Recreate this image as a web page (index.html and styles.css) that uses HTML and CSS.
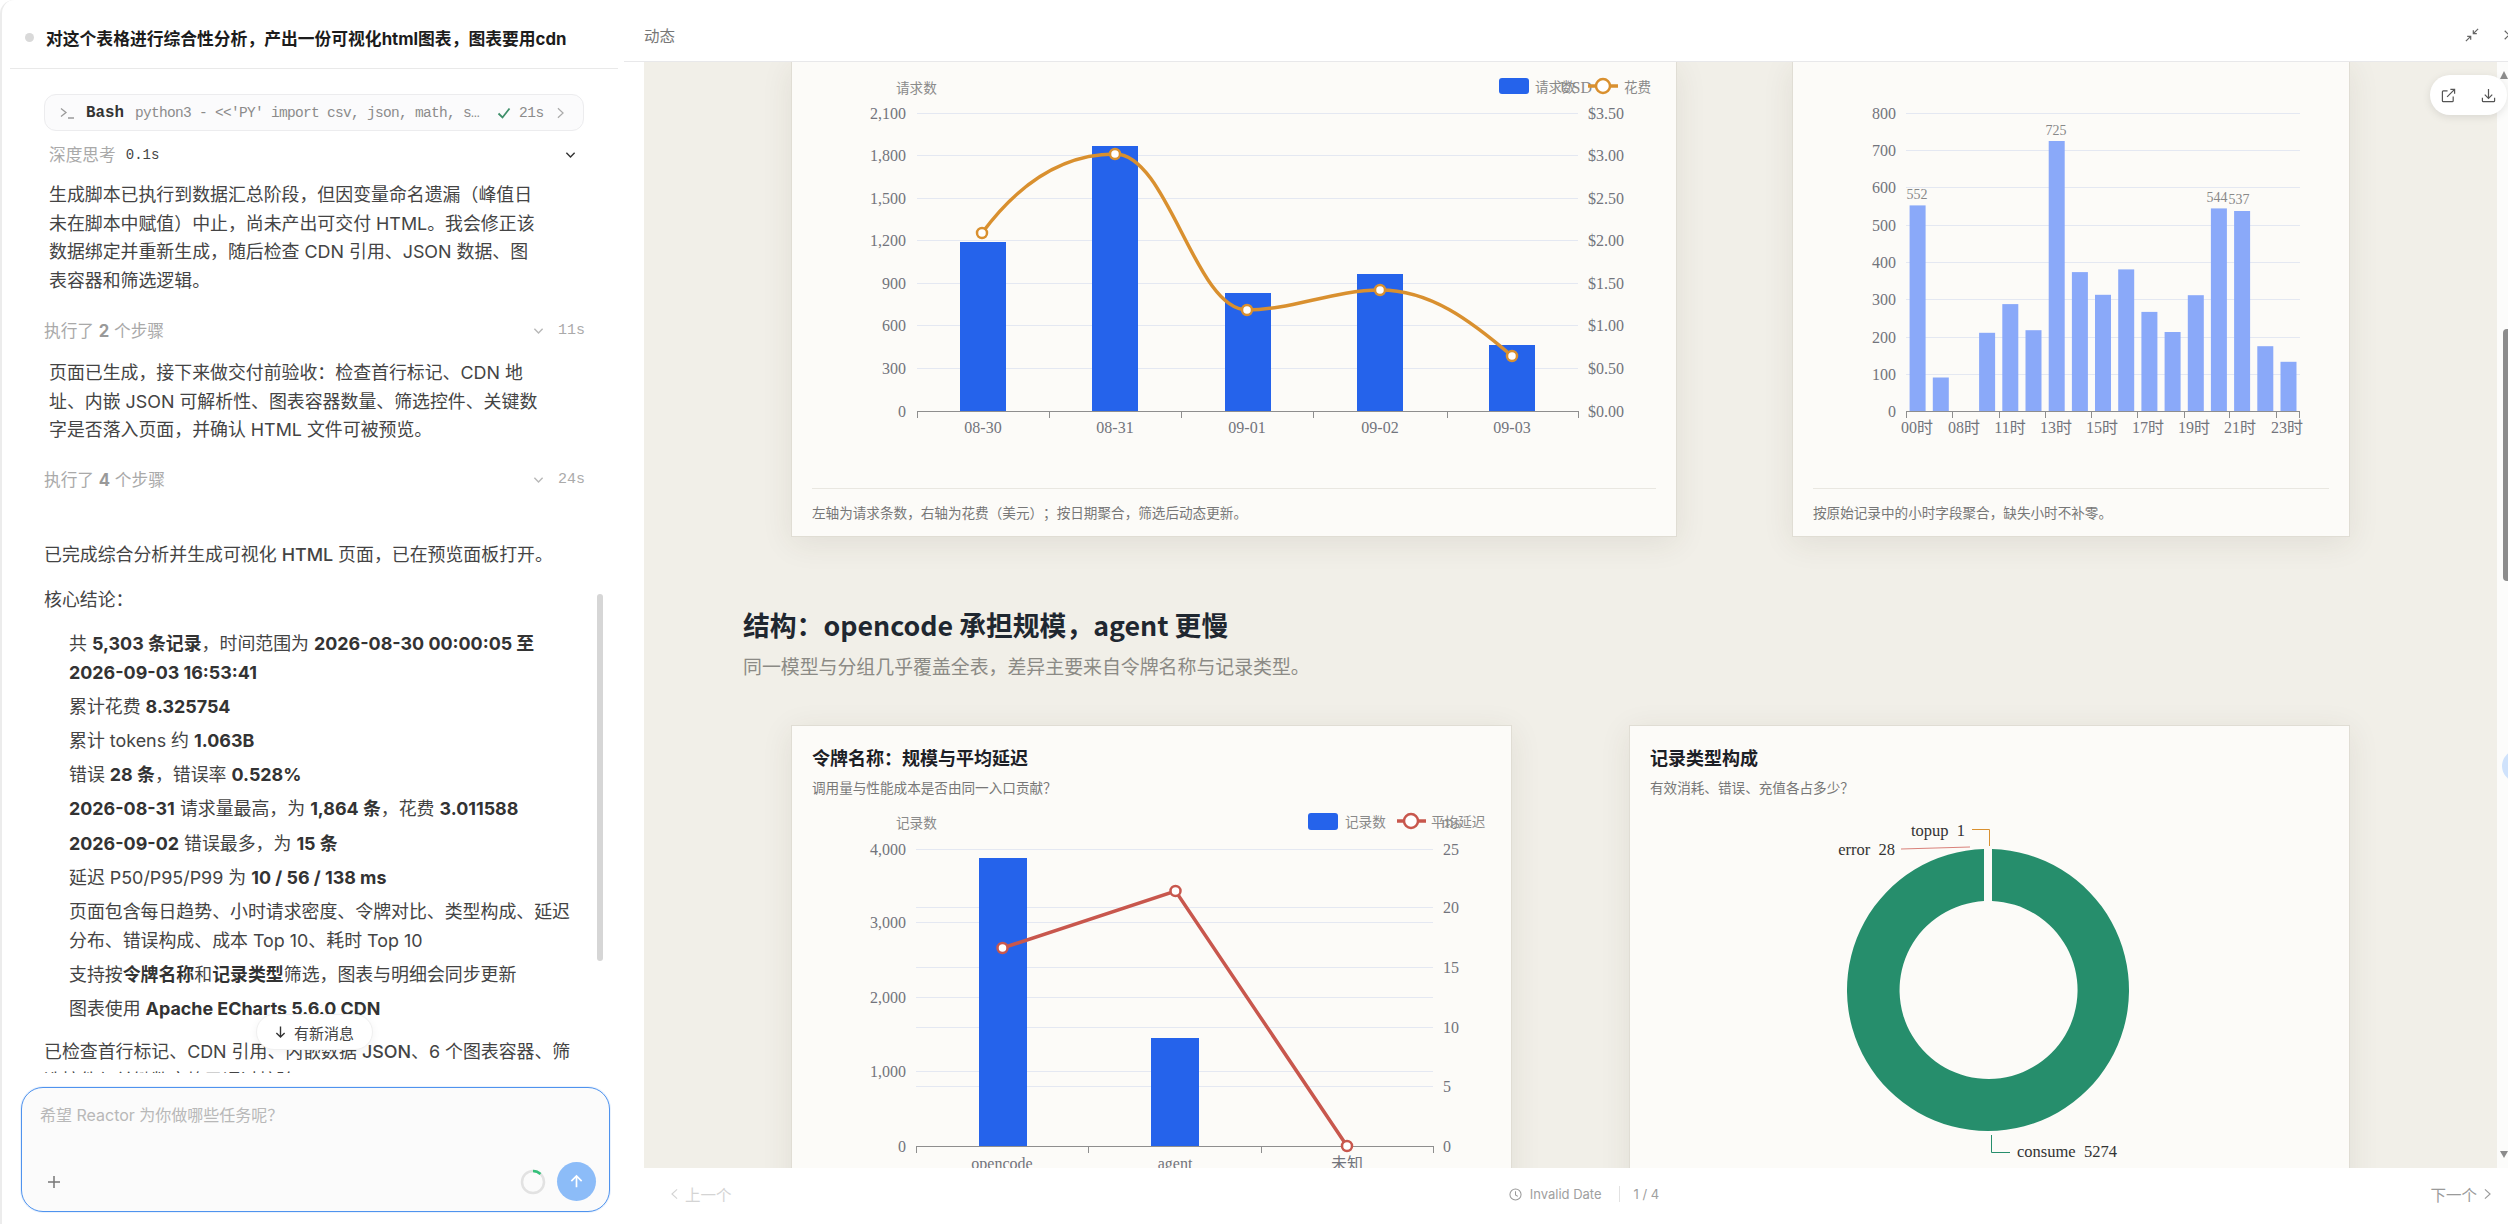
FILE: index.html
```html
<!DOCTYPE html>
<html lang="zh-CN">
<head>
<meta charset="utf-8">
<title>Reactor</title>
<link rel="stylesheet" href="styles.css">
</head>
<body>
<div class="app">
  <aside class="chat">
    <header class="chat-head">
      <span class="dot"></span>
      <h1>对这个表格进行综合性分析，产出一份可视化html图表，图表要用cdn</h1>
    </header>
    <div class="messages">
      <div class="bash">
        <svg class="ic-term" viewBox="0 0 14 12"><path d="M1 1.5 6 5.5 1 9.5M8 11h6"/></svg>
        <span class="bash-name">Bash</span>
        <span class="bash-cmd">python3 - &lt;&lt;'PY' import csv, json, math, s…</span>
        <svg class="ic-check" viewBox="0 0 14 14"><path d="M1.5 7.5 5.5 11.5 12.5 2.5"/></svg>
        <span class="bash-time">21s</span>
        <svg class="ic-chev" viewBox="0 0 8 14"><path d="M1 1.5 7 7 1 12.5"/></svg>
      </div>
      <div class="think">
        <span class="think-label">深度思考</span><span class="think-time">0.1s</span>
        <svg class="ic-down dark" viewBox="0 0 12 8"><path d="M1.5 1.5 6 6.2 10.5 1.5"/></svg>
      </div>
      <p class="para indent">生成脚本已执行到数据汇总阶段，但因变量命名遗漏（峰值日<br>未在脚本中赋值）中止，尚未产出可交付 HTML。我会修正该<br>数据绑定并重新生成，随后检查 CDN 引用、JSON 数据、图<br>表容器和筛选逻辑。</p>
      <div class="steps first">
        <span>执行了 <b>2</b> 个步骤</span>
        <svg class="ic-down" viewBox="0 0 12 8"><path d="M1.5 1.5 6 6.2 10.5 1.5"/></svg>
        <span class="steps-time">11s</span>
      </div>
      <p class="para indent second">页面已生成，接下来做交付前验收：检查首行标记、CDN 地<br>址、内嵌 JSON 可解析性、图表容器数量、筛选控件、关键数<br>字是否落入页面，并确认 HTML 文件可被预览。</p>
      <div class="steps">
        <span>执行了 <b>4</b> 个步骤</span>
        <svg class="ic-down" viewBox="0 0 12 8"><path d="M1.5 1.5 6 6.2 10.5 1.5"/></svg>
        <span class="steps-time">24s</span>
      </div>
      <p class="para done">已完成综合分析并生成可视化 <span class="mid-weight">HTML</span> 页面，已在预览面板打开。</p>
      <p class="para core">核心结论：</p>
      <ul class="points">
        <li>共 <b>5,303 条记录</b>，时间范围为 <b>2026-08-30 00:00:05 至<br>2026-09-03 16:53:41</b></li>
        <li>累计花费 <b>8.325754</b></li>
        <li>累计 tokens 约 <b>1.063B</b></li>
        <li>错误 <b>28 条</b>，错误率 <b>0.528%</b></li>
        <li><b>2026-08-31</b> 请求量最高，为 <b>1,864 条</b>，花费 <b>3.011588</b></li>
        <li><b>2026-09-02</b> 错误最多，为 <b>15 条</b></li>
        <li>延迟 P50/P95/P99 为 <b>10 / 56 / 138 ms</b></li>
        <li>页面包含每日趋势、小时请求密度、令牌对比、类型构成、延迟<br>分布、错误构成、成本 Top 10、耗时 Top 10</li>
        <li>支持按<b>令牌名称</b>和<b>记录类型</b>筛选，图表与明细会同步更新</li>
        <li>图表使用 <b>Apache ECharts 5.6.0 CDN</b></li>
      </ul>
      <p class="para tail">已检查首行标记、CDN 引用、内嵌数据 <span class="mid-weight">JSON</span>、6 个图表容器、筛<br>选控件与关键数字均已通过校验。</p>
    </div>
    <span class="chat-scroll"></span>
    <button class="new-msg" type="button">
      <svg viewBox="0 0 12 14"><path d="M6 1v11.5M1.5 8 6 12.5 10.500 8"/></svg>
      有新消息
    </button>
    <div class="composer">
      <div class="input">
        <div class="placeholder">希望 Reactor 为你做哪些任务呢？</div>
        <div class="input-tools">
          <svg class="ic-plus" viewBox="0 0 14 14"><path d="M7 1v12M1 7h12"/></svg>
          <svg class="ic-spin" viewBox="0 0 26 26"><circle class="spin-bg" cx="13" cy="13" r="11"/><path class="spin-fg" d="M13 2a11 11 0 0 1 7.5 3"/></svg>
          <span class="send"><svg viewBox="0 0 16 16"><path d="M8 14V2M2.5 7.5 8 2l5.5 5.5"/></svg></span>
        </div>
      </div>
    </div>
  </aside>

  <main class="preview">
    <header class="preview-head">
      <span class="preview-title">动态</span>
      <svg class="ic-shrink" viewBox="0 0 16 16"><path d="M1 15 6.5 9.5M2.5 9.5h4v4M15 1 9.5 6.5M9.5 2.5v4h4"/></svg>
      <svg class="ic-close" viewBox="0 0 14 14"><path d="M2 2l10 10M12 2 2 12"/></svg>
    </header>
    <div class="stage">
      <div class="canvas">
        <section class="row row-top">
          <article class="card card-open">
            <svg class="chart" width="884" height="420" viewBox="792 62 884 420">
              <g class="grid">
                <path d="M917 113.500H1578M917 155.500H1578M917 198.500H1578M917 240.500H1578M917 283.500H1578M917 325.500H1578M917 368.500H1578"/>
              </g>
              <g class="bar-main">
                <rect x="960" y="242" width="46" height="169"/>
                <rect x="1092" y="146" width="46" height="265"/>
                <rect x="1225" y="293" width="46" height="118"/>
                <rect x="1357" y="274" width="46" height="137"/>
                <rect x="1489" y="345" width="46" height="66"/>
              </g>
              <path class="axis" d="M917 411.500H1579M917.500 411V418M1049.500 411V418M1181.500 411V418M1313.500 411V418M1447.500 411V418M1578.500 411V418"/>
              <path class="line-orange" d="M982 233C1025 175 1070 154 1115 154C1168 154 1195 310 1247 310C1290 310 1335 290 1380 290C1430 290 1470 320 1512 356"/>
              <g class="pt-orange">
                <circle cx="982" cy="233" r="5"/><circle cx="1115" cy="154" r="5"/><circle cx="1247" cy="310" r="5"/><circle cx="1380" cy="290" r="5"/><circle cx="1512" cy="356" r="5"/>
              </g>
              <g class="tx end">
                <text x="906" y="113">2,100</text><text x="906" y="155">1,800</text><text x="906" y="198">1,500</text><text x="906" y="240">1,200</text><text x="906" y="283">900</text><text x="906" y="325">600</text><text x="906" y="368">300</text><text x="906" y="411">0</text>
              </g>
              <g class="tx">
                <text x="1588" y="113">$3.50</text><text x="1588" y="155">$3.00</text><text x="1588" y="198">$2.50</text><text x="1588" y="240">$2.00</text><text x="1588" y="283">$1.50</text><text x="1588" y="325">$1.00</text><text x="1588" y="368">$0.50</text><text x="1588" y="411">$0.00</text>
              </g>
              <g class="tx mid">
                <text x="983" y="427">08-30</text><text x="1115" y="427">08-31</text><text x="1247" y="427">09-01</text><text x="1380" y="427">09-02</text><text x="1512" y="427">09-03</text>
              </g>
              <text class="cn" x="896" y="87">请求数</text>
              <rect class="legend-bar" x="1499" y="78" width="30" height="16" rx="3"/>
              <text class="cn" x="1535" y="86">请求数</text>
              <text class="tx-soft end" x="1592" y="87">USD</text>
              <path class="line-orange" d="M1588 86H1618"/>
              <circle class="pt-legend-o" cx="1603" cy="86" r="7"/>
              <text class="cn" x="1624" y="86">花费</text>
            </svg>
            <p class="card-foot">左轴为请求条数，右轴为花费（美元）；按日期聚合，筛选后动态更新。</p>
          </article>
          <article class="card card-open">
            <svg class="chart" width="556" height="420" viewBox="1793 62 556 420">
              <g class="grid">
                <path d="M1906 113.500H2300M1906 150.500H2300M1906 187.500H2300M1906 225.500H2300M1906 262.500H2300M1906 299.500H2300M1906 337.500H2300M1906 374.500H2300"/>
              </g>
              <g class="bar-soft">
                <rect x="1909.600" y="205.400" width="16" height="205.600"/>
                <rect x="1932.800" y="377.500" width="16" height="33.500"/>
                <rect x="1979.100" y="332.800" width="16" height="78.200"/>
                <rect x="2002.300" y="304.100" width="16" height="106.900"/>
                <rect x="2025.500" y="330.200" width="16" height="80.800"/>
                <rect x="2048.700" y="141" width="16" height="270"/>
                <rect x="2071.900" y="272.100" width="16" height="138.900"/>
                <rect x="2095" y="294.800" width="16" height="116.200"/>
                <rect x="2118.200" y="269.400" width="16" height="141.600"/>
                <rect x="2141.400" y="311.900" width="16" height="99.100"/>
                <rect x="2164.600" y="332" width="16" height="79"/>
                <rect x="2187.800" y="295.200" width="16" height="115.800"/>
                <rect x="2210.900" y="208.400" width="16" height="202.600"/>
                <rect x="2234.100" y="211" width="16" height="200"/>
                <rect x="2257.300" y="346.200" width="16" height="64.800"/>
                <rect x="2280.500" y="361.800" width="16" height="49.200"/>
              </g>
              <path class="axis" d="M1906 411.500H2300M1906.500 411V418M1952.500 411V418M1999.500 411V418M2045.500 411V418M2091.500 411V418M2137.500 411V418M2184.500 411V418M2229.500 411V418M2276.500 411V418M2299.500 411V418"/>
              <g class="tx end">
                <text x="1896" y="113">800</text><text x="1896" y="150">700</text><text x="1896" y="187">600</text><text x="1896" y="225">500</text><text x="1896" y="262">400</text><text x="1896" y="299">300</text><text x="1896" y="337">200</text><text x="1896" y="374">100</text><text x="1896" y="411">0</text>
              </g>
              <g class="tx mid">
                <text x="1917" y="427">00时</text><text x="1964" y="427">08时</text><text x="2010" y="427">11时</text><text x="2056" y="427">13时</text><text x="2102" y="427">15时</text><text x="2148" y="427">17时</text><text x="2194" y="427">19时</text><text x="2240" y="427">21时</text><text x="2287" y="427">23时</text>
              </g>
              <g class="val">
                <text x="1917" y="194">552</text><text x="2056" y="130">725</text><text x="2217" y="197">544</text><text x="2239" y="199">537</text>
              </g>
            </svg>
            <p class="card-foot">按原始记录中的小时字段聚合，缺失小时不补零。</p>
          </article>
        </section>
        <div class="section-head">
          <h2>结构：opencode 承担规模，agent 更慢</h2>
          <p>同一模型与分组几乎覆盖全表，差异主要来自令牌名称与记录类型。</p>
        </div>
        <section class="row row-bottom">
          <article class="card">
            <div class="card-head">
              <h3>令牌名称：规模与平均延迟</h3>
              <p>调用量与性能成本是否由同一入口贡献？</p>
            </div>
            <svg class="chart" width="719" height="370" viewBox="792 798 719 370">
              <g class="grid">
                <path d="M916 849.500H1433M916 922.500H1433M916 997.500H1433M916 1071.500H1433M916 907.500H1433M916 967.500H1433M916 1027.500H1433M916 1086.500H1433"/>
              </g>
              <g class="bar-main">
                <rect x="979" y="858" width="48" height="288"/>
                <rect x="1151" y="1038" width="48" height="108"/>
              </g>
              <path class="axis" d="M916 1146.500H1434M916.500 1146V1153M1088.500 1146V1153M1261.500 1146V1153M1433.500 1146V1153"/>
              <path class="line-red" d="M1002.500 948 1175.500 891 1347 1146"/>
              <g class="pt-red">
                <circle cx="1002.500" cy="948" r="5"/><circle cx="1175.500" cy="891" r="5"/><circle cx="1347" cy="1146" r="5"/>
              </g>
              <g class="tx end">
                <text x="906" y="849">4,000</text><text x="906" y="922">3,000</text><text x="906" y="997">2,000</text><text x="906" y="1071">1,000</text><text x="906" y="1146">0</text>
              </g>
              <g class="tx">
                <text x="1443" y="849">25</text><text x="1443" y="907">20</text><text x="1443" y="967">15</text><text x="1443" y="1027">10</text><text x="1443" y="1086">5</text><text x="1443" y="1146">0</text>
              </g>
              <g class="tx mid">
                <text x="1002" y="1163">opencode</text><text x="1175" y="1163">agent</text><text x="1347" y="1163">未知</text>
              </g>
              <text class="cn" x="896" y="822">记录数</text>
              <rect class="legend-bar" x="1308" y="813" width="30" height="17" rx="3"/>
              <text class="cn" x="1345" y="821">记录数</text>
              <path class="line-red" d="M1397 821H1426"/>
              <circle class="pt-legend-r" cx="1411" cy="821" r="7"/>
              <text class="cn" x="1431" y="821">平均延迟</text>
              <text class="tx-soft end" x="1460" y="822">ms</text>
            </svg>
          </article>
          <article class="card">
            <div class="card-head">
              <h3>记录类型构成</h3>
              <p>有效消耗、错误、充值各占多少？</p>
            </div>
            <svg class="chart" width="719" height="370" viewBox="1630 798 719 370">
              <path class="donut" d="M1992 849A141 141 0 1 1 1984 849L1984 901.100A89 89 0 1 0 1992 901.050Z"/>
              <path class="lead-o" d="M1972 829.500H1989.500V846"/>
              <path class="lead-r" d="M1901 849 1970 847"/>
              <path class="lead-g" d="M1991.500 1135V1152.500H2010"/>
              <g class="pie-label">
                <text x="1965" y="830" text-anchor="end">topup  1</text>
                <text x="1895" y="849" text-anchor="end">error  28</text>
                <text x="2017" y="1151">consume  5274</text>
              </g>
            </svg>
          </article>
        </section>
      </div>
      <div class="gutter">
        <span class="gutter-up"></span>
        <span class="gutter-thumb"></span>
        <span class="gutter-down"></span>
        <span class="gutter-tab"></span>
      </div>
      <div class="float-tools">
        <svg viewBox="0 0 16 16"><path d="M7 3H2.500A1 1 0 0 0 1.500 4V13.500A1 1 0 0 0 2.500 14.500H12A1 1 0 0 0 13 13.500V9M6.500 9.500 14.500 1.500M10 1.500h4.500V6"/></svg>
        <svg viewBox="0 0 16 16"><path d="M8 1V10.500M4 7l4 4 4-4M1.500 10.500V13.500A1 1 0 0 0 2.500 14.500H13.500A1 1 0 0 0 14.500 13.500V10.500"/></svg>
      </div>
    </div>
    <footer class="preview-foot">
      <span class="pager off"><svg viewBox="0 0 8 14"><path d="M7 1.500 1 7l6 5.500"/></svg>上一个</span>
      <span class="meta">
        <svg class="ic-clock" viewBox="0 0 14 14"><circle cx="7" cy="7" r="6"/><path d="M7 3.500V7.500L9.500 9"/></svg>
        <span>Invalid Date</span>
        <i class="sep"></i>
        <span>1 / 4</span>
      </span>
      <span class="pager">下一个<svg viewBox="0 0 8 14"><path d="M1 1.500 7 7l-6 5.500"/></svg></span>
    </footer>
  </main>
</div>
</body>
</html>
```

FILE: styles.css
```css
* { box-sizing: border-box; }
html, body { margin: 0; height: 100%; overflow: hidden; background: #fff; }
body { font-family: Inter, "Noto Sans CJK SC", sans-serif; color: #333; text-spacing-trim: space-all; }
svg { fill: none; }
p, h1, h2, h3, ul { margin: 0; padding: 0; }

.app { display: flex; width: 2508px; height: 1224px; overflow: hidden; }

/* chat panel */
.chat { position: relative; width: 624px; height: 1224px; display: flex; flex-direction: column; border-left: 2px solid #ececec; border-top-left-radius: 14px; background: #fff; flex: none; }
.chat-head { height: 69px; margin: 0 6px 0 8px; display: flex; align-items: center; gap: 12px; padding: 7px 0 0 15px; border-bottom: 1px solid #e9e9e9; }
.dot { width: 9px; height: 9px; border-radius: 50%; background: #d9d9d9; flex: none; }
.chat-head h1 { font-size: 16.800px; font-weight: 700; color: #1c1c1c; white-space: nowrap; }

.messages { flex: 1; min-height: 0; overflow: hidden; padding: 25px 0 0 42px; }
.bash { width: 540px; height: 37px; display: flex; align-items: center; border: 1px solid #ececee; border-radius: 12px; background: #fbfbfc; padding-left: 15px; font-family: "Liberation Mono", "DejaVu Sans Mono", monospace; }
.ic-term { width: 14px; height: 12px; stroke: #9a9a9a; stroke-width: 1.3; flex: none; }
.bash-name { margin-left: 12px; font-size: 15.800px; font-weight: 700; color: #333; }
.bash-cmd { margin-left: 11px; font-size: 14.500px; letter-spacing: -0.700px; color: #8b8b8b; white-space: pre; }
.ic-check { width: 14px; height: 14px; margin-left: 18px; stroke: #3f8f6a; stroke-width: 1.8; flex: none; }
.bash-time { margin-left: 8px; font-size: 14.500px; letter-spacing: -0.500px; color: #8b8b8b; }
.ic-chev { width: 7px; height: 12px; margin-left: 13px; stroke: #aaa; stroke-width: 1.4; flex: none; }

.think { width: 540px; height: 24px; margin-top: 12px; padding: 0 8px 0 5px; display: flex; align-items: center; font-size: 16.700px; line-height: 24px; }
.think-label { color: #a9a9a9; }
.think-time { margin-left: 10px; font-size: 14px; color: #444; font-family: "Liberation Mono", monospace; }
.ic-down { width: 11px; height: 8px; stroke: #b8b8b8; stroke-width: 1.5; flex: none; }
.ic-down.dark { margin-left: auto; stroke: #333; }

.para { font-size: 17.900px; line-height: 28.700px; color: #444; white-space: nowrap; }
.mid-weight { font-weight: 500; }
.para.indent { margin-top: 14px; padding-left: 5px; }
.para.second { margin-top: 16px; }
.steps { width: 541px; height: 24px; display: flex; align-items: center; margin-top: 23px; font-size: 16.700px; line-height: 24px; color: #a9a9a9; }
.steps b { font-weight: 700; color: #999; }
.steps .ic-down { margin-left: auto; }
.steps-time { margin-left: 14px; font-size: 15px; font-family: "Liberation Mono", monospace; color: #aaa; }
.para.done { margin-top: 49px; }
.para.core { margin-top: 16px; }
.points { list-style: none; margin-top: 15.500px; padding-left: 25px; }
.points li { font-size: 17.900px; line-height: 28.700px; color: #444; white-space: nowrap; margin-bottom: 5.500px; }
.points b { font-weight: 700; color: #333; }
.para.tail { margin-top: 14.500px; }

.chat-scroll { position: absolute; left: 595px; top: 594px; width: 6px; height: 367px; border-radius: 3px; background: #d6d6d6; }
.new-msg { position: absolute; left: 254px; top: 1014px; width: 117px; height: 36px; display: flex; align-items: center; justify-content: center; gap: 8px; border: 1px solid #f0f0f0; border-radius: 18px; background: #fff; font-family: inherit; font-size: 15px; color: #444; box-shadow: 0 2px 8px rgba(0,0,0,.05); padding: 0; }
.new-msg svg { width: 11px; height: 14px; stroke: #333; stroke-width: 1.5; }

.composer { flex: none; height: 151px; padding: 14px 14px 12px 19px; background: #fff; position: relative; }
.input { height: 125px; border: 1px solid #4f93ee; border-radius: 22px; background: #fbfbfb; padding: 17px 17px 10px 18px; display: flex; flex-direction: column; justify-content: space-between; box-shadow: 0 0 0 1px rgba(79,147,238,.12); }
.placeholder { font-size: 16px; line-height: 20px; color: #b8b8b8; }
.input-tools { display: flex; align-items: center; }
.ic-plus { width: 14px; height: 14px; margin-left: 7px; stroke: #777; stroke-width: 1.5; }
.ic-spin { width: 26px; height: 26px; margin-left: auto; }
.spin-bg { stroke: #e2e2e2; stroke-width: 2.5; }
.spin-fg { stroke: #35c07a; stroke-width: 2.5; }
.send { width: 39px; height: 39px; margin-left: 11px; margin-right: -4px; border-radius: 50%; background: #8cbcf8; display: flex; align-items: center; justify-content: center; }
.send svg { width: 15px; height: 15px; stroke: #fff; stroke-width: 1.8; }

/* preview */
.preview { flex: 1; min-width: 0; display: flex; flex-direction: column; }
.preview-head { height: 62px; flex: none; display: flex; align-items: center; padding: 9px 0 0 20px; border-bottom: 1px solid #e8e8ea; }
.preview-title { font-size: 15.500px; color: #777; }
.ic-shrink { width: 14px; height: 14px; margin-left: auto; stroke: #666; stroke-width: 1.4; }
.ic-close { width: 12px; height: 12px; flex: none; margin: 0 -7px 0 24px; stroke: #666; stroke-width: 1.4; }

.stage { position: relative; flex: 1; min-height: 0; display: flex; }
.canvas { width: 1853px; margin-left: 20px; overflow: hidden; background: #f1efe8; flex: none; }
.row { display: grid; padding-left: 147px; }
.row-top { grid-template-columns: 886px 558px; column-gap: 115px; }
.row-bottom { grid-template-columns: 721px 721px; column-gap: 117px; }
.card { background: #fcfbf8; border: 1px solid #e0ddd4; box-shadow: 0 6px 30px rgba(70,60,30,.09); height: 540px; }
.card-open { border-top: 0; height: auto; }
.chart { display: block; }
.chart text { dominant-baseline: central; }
.card-foot { margin: 6px 20px 0 20px; padding: 14px 0 13px; border-top: 1px solid #e9e7e1; font-size: 13.600px; line-height: 20px; color: #777; }
.card-head { padding: 20px 0 0 20px; height: 72px; }
.card-head h3 { font-size: 18px; line-height: 26px; font-weight: 700; color: #1c2026; }
.card-head p { margin-top: 6px; font-size: 13.600px; line-height: 20px; color: #777; }
.section-head { padding: 69px 0 44px 99px; }
.section-head h2 { font-family: "Noto Sans CJK SC", sans-serif; font-size: 26.800px; line-height: 38px; font-weight: 700; color: #1f2730; }
.section-head p { margin-top: 11px; font-size: 18.900px; line-height: 26px; color: #8b8a85; }

.grid path { stroke: #e4e8f2; stroke-width: 1; }
.axis { stroke: #8e8e8e; stroke-width: 1; }
.bar-main rect, .legend-bar { fill: #2563eb; }
.bar-soft rect { fill: #8aa9f9; }
.line-orange { stroke: #d9902f; stroke-width: 3.500; }
.pt-orange circle, .pt-legend-o { fill: #fff; stroke: #d9902f; stroke-width: 2.500; }
.line-red { stroke: #c8574d; stroke-width: 3.500; }
.pt-red circle, .pt-legend-r { fill: #fff; stroke: #c8574d; stroke-width: 2.500; }
.tx text, .tx-soft { font-family: "Liberation Serif", "Noto Sans CJK SC", serif; font-size: 16px; fill: #72747c; }
.tx-soft { fill: #8a8a8a; }
.end, .end text { text-anchor: end; }
.mid text { text-anchor: middle; }
.val text { font-family: "Liberation Serif", serif; font-size: 14px; fill: #888; text-anchor: middle; }
.cn { font-family: "Noto Sans CJK SC", sans-serif; font-size: 13.600px; fill: #8a8a8a; }
.donut { fill: #268e6c; }
.lead-o { stroke: #d9902f; stroke-width: 1; }
.lead-r { stroke: #d9827b; stroke-width: 1.200; }
.lead-g { stroke: #268e6c; stroke-width: 1; }
.pie-label text { font-family: "Liberation Serif", serif; font-size: 16.500px; fill: #333; white-space: pre; }

.gutter { position: relative; flex: 1; background: #fcfcfb; overflow: hidden; }
.gutter-up, .gutter-down { position: absolute; right: 0; width: 0; height: 0; border-left: 4px solid transparent; border-right: 4px solid transparent; }
.gutter-up { top: 9px; border-bottom: 8px solid #8c8c8c; }
.gutter-down { top: 1089px; border-top: 7px solid #8c8c8c; }
.gutter-thumb { position: absolute; right: 0; top: 267px; width: 5px; height: 252px; border-radius: 4px 0 0 4px; background: #8c8c8c; }
.gutter-tab { position: absolute; left: 5px; top: 688px; width: 32px; height: 32px; border-radius: 50%; background: #cfe2fb; }

.float-tools { position: absolute; left: 1806px; top: 13px; width: 77px; height: 40px; display: flex; align-items: center; justify-content: space-between; padding: 0 11px; border-radius: 20px; background: #fff; box-shadow: 0 2px 8px rgba(0,0,0,.1); }
.float-tools svg { width: 15px; height: 15px; stroke: #555; stroke-width: 1.300; }

.preview-foot { height: 56px; flex: none; display: flex; align-items: center; padding: 0 17px 4px 47px; justify-content: space-between; }
.pager { display: flex; align-items: center; gap: 7px; font-size: 15.500px; color: #9a9a9a; }
.pager svg { width: 7px; height: 12px; stroke: #999; stroke-width: 1.300; }
.pager.off, .pager.off svg { color: #d4d4d4; stroke: #d4d4d4; }
.meta { display: flex; align-items: center; gap: 8px; font-size: 13px; color: #a0a0a0; margin-left: 6px; }
.ic-clock { width: 13px; height: 13px; stroke: #999; stroke-width: 1.100; }
.sep { width: 1px; height: 16px; margin: 0 6px 0 9px; background: #e2e2e2; }
```
